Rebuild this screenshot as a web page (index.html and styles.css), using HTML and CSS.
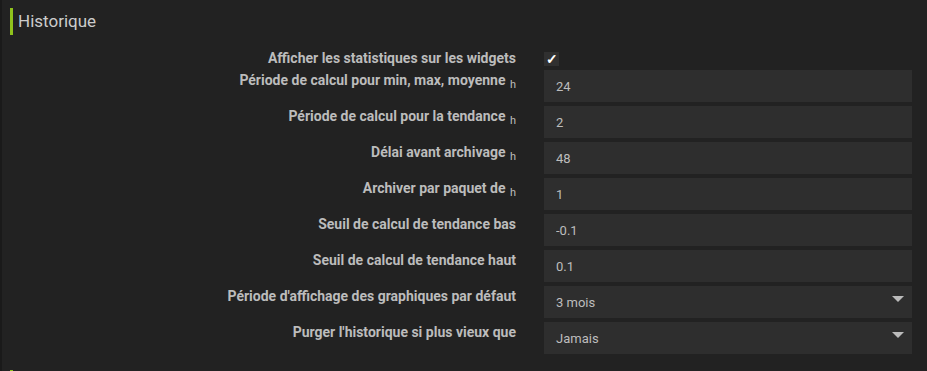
FILE: index.html
```html
<!DOCTYPE html>
<html lang="fr">
<head>
    <meta charset="UTF-8">
    <meta name="viewport" content="width=device-width, initial-scale=1.0">
    <title>Historique</title>
    <link rel="stylesheet" href="styles.css">
</head>
<body>
    <div class="panel">
        <div class="legend">Historique</div>
        <form class="form-horizontal">
            <div class="form-group check-row">
                <label class="control-label">Afficher les statistiques sur les widgets</label>
                <div class="control">
                    <span class="checkbox">&#10003;</span>
                </div>
            </div>
            <div class="form-group">
                <label class="control-label">Période de calcul pour min, max, moyenne <sub>h</sub></label>
                <div class="control"><input type="text" value="24"></div>
            </div>
            <div class="form-group">
                <label class="control-label">Période de calcul pour la tendance <sub>h</sub></label>
                <div class="control"><input type="text" value="2"></div>
            </div>
            <div class="form-group">
                <label class="control-label">Délai avant archivage <sub>h</sub></label>
                <div class="control"><input type="text" value="48"></div>
            </div>
            <div class="form-group">
                <label class="control-label">Archiver par paquet de <sub>h</sub></label>
                <div class="control"><input type="text" value="1"></div>
            </div>
            <div class="form-group">
                <label class="control-label">Seuil de calcul de tendance bas</label>
                <div class="control"><input type="text" value="-0.1"></div>
            </div>
            <div class="form-group">
                <label class="control-label">Seuil de calcul de tendance haut</label>
                <div class="control"><input type="text" value="0.1"></div>
            </div>
            <div class="form-group">
                <label class="control-label">Période d'affichage des graphiques par défaut</label>
                <div class="control select">
                    <div class="select-box">3 mois</div>
                </div>
            </div>
            <div class="form-group">
                <label class="control-label">Purger l'historique si plus vieux que</label>
                <div class="control select">
                    <div class="select-box">Jamais</div>
                </div>
            </div>
        </form>
        <div class="legend next"></div>
    </div>
</body>
</html>
```

FILE: styles.css
```css
body {
    margin: 0;
    background-color: #222222;
    font-family: Roboto, 'Liberation Sans', Arial, sans-serif;
    color: #bbbbbb;
    height: 371px;
    overflow: hidden;
}
.panel {
    border-left: 2px solid #1a1a1a;
    padding-top: 8px;
    height: 371px;
    box-sizing: border-box;
    overflow: hidden;
}
.legend {
    margin-left: 8px;
    height: 27px;
    line-height: 26px;
    border-left: 3px solid #8fc21c;
    padding-left: 5px;
    font-size: 17px;
    color: #cccccc;
}
.legend.next {
    margin-top: 16px;
    height: 1px;
}
.form-horizontal {
    margin-top: 15px;
}
.form-group {
    display: flex;
    margin-bottom: 4px;
}
.control-label {
    width: 514px;
    flex: none;
    text-align: right;
    padding-top: 2px;
    font-size: 14px;
    font-weight: bold;
    line-height: 16px;
    color: #bcbcbc;
}
.control-label sub {
    font-size: 11px;
    font-weight: normal;
    vertical-align: -3px;
    margin-left: 1px;
}
.check-row .control-label {
    padding-top: 0;
}
.control {
    margin-left: 28px;
    width: 368px;
    position: relative;
}
.check-row .control {
    height: 16px;
}
.checkbox {
    display: block;
    margin-top: 2px;
    width: 15px;
    height: 14px;
    background-color: #303030;
    color: #ffffff;
    font-size: 14px;
    line-height: 15px;
    text-align: center;
    font-weight: bold;
}
input[type="text"],
.select-box {
    display: block;
    width: 100%;
    height: 32px;
    box-sizing: border-box;
    border: none;
    padding: 0 12px;
    background-color: #2e2e2e;
    color: #bdbdbd;
    font-family: Roboto, 'Liberation Sans', Arial, sans-serif;
    font-size: 13px;
    line-height: 32px;
    outline: none;
}
input[type="text"] {
    padding-top: 2px;
}
.select-box {
    padding-top: 1px;
}
.select::after {
    content: '';
    position: absolute;
    right: 8px;
    top: 10px;
    border-left: 6px solid transparent;
    border-right: 6px solid transparent;
    border-top: 6px solid #bbbbbb;
}
```
